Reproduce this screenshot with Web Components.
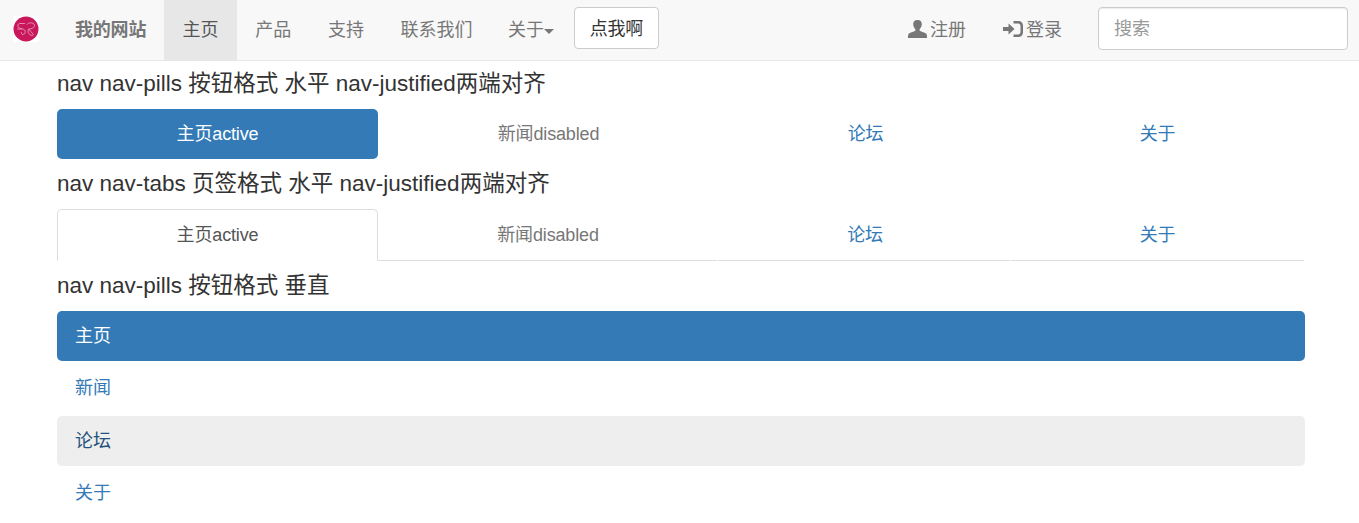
<!DOCTYPE html>
<html lang="zh">
<head>
<meta charset="utf-8">
<title>nav</title>
<style>
html, body { margin: 0; padding: 0; background: #fff; }
body {
    font-family: "Liberation Sans", "Noto Sans CJK SC", sans-serif;
    font-size: 18px;
    line-height: 26px;
    color: #333;
    overflow: hidden;
}
</style>
</head>
<body>
<site-navbar></site-navbar>
<page-main>
    <nav-title>nav nav-pills 按钮格式 水平 nav-justified两端对齐</nav-title>
    <nav-row kind="pills"></nav-row>
    <nav-title>nav nav-tabs 页签格式 水平 nav-justified两端对齐</nav-title>
    <nav-row kind="tabs"></nav-row>
    <nav-title>nav nav-pills 按钮格式 垂直</nav-title>
    <nav-stack></nav-stack>
</page-main>

<script>
class SiteNavbar extends HTMLElement {
    constructor() {
        super();
        this.attachShadow({ mode: 'open' });
        this.shadowRoot.innerHTML = `
            <style>
                :host {
                    display: flex;
                    align-items: stretch;
                    height: 60px;
                    background: #f8f8f8;
                    border-bottom: 1px solid #e7e7e7;
                }
                a {
                    display: flex;
                    align-items: center;
                    padding: 0 18px;
                    color: #777;
                    text-decoration: none;
                    white-space: nowrap;
                }
                .links a { padding: 0 18.35px; }
                .links { display: flex; }
                .logo {
                    width: 26px;
                    height: 26px;
                    margin: 16px 0 0 13px;
                    background: #fff;
                }
                .brand { margin-left: 18px; padding-right: 18px; font-weight: bold; letter-spacing: -.2px; }
                .active { background: #e7e7e7; color: #555; }
                .links a.about { padding-left: 17px; padding-right: 20px; }
                .caret {
                    width: 0;
                    height: 0;
                    margin-left: 0;
                    margin-top: 2px;
                    border-top: 5px solid #777;
                    border-left: 5px solid transparent;
                    border-right: 5px solid transparent;
                }
                button {
                    align-self: flex-start;
                    box-sizing: border-box;
                    width: 85px;
                    height: 42px;
                    margin: 7px 0 0;
                    padding: 2px 0 0;
                    font: inherit;
                    letter-spacing: -.2px;
                    color: #333;
                    background: #fff;
                    border: 1px solid #ccc;
                    border-radius: 4px;
                }
                .spacer { flex: 1; }
                svg.icon { fill: #777; flex: none; }
                input {
                    align-self: flex-start;
                    box-sizing: border-box;
                    width: 250px;
                    height: 43px;
                    margin: 7px 11px 0 18px;
                    padding: 2px 15px 0;
                    font: inherit;
                    color: #555;
                    background: #fff;
                    border: 1px solid #ccc;
                    border-radius: 4px;
                    box-shadow: inset 0 1px 1px rgba(0, 0, 0, .075);
                    outline: none;
                }
                input::placeholder { color: #999; opacity: 1; }
            </style>
            <svg class="logo" viewBox="0 0 26 26">
                <circle cx="13" cy="13" r="12.5" fill="#c9175c"/>
                <path d="M12 7.5H7C4.5 7.5 4 11 6.5 12L11 13.5C13 14.5 12.5 18.5 10 18.5C8.5 18.5 8 17 8.5 16M4 13H9M14 8.5C15 6.5 20.5 6 21.5 9C22 11.5 19 13 15.5 13L20 18C21 19 19 20 17.5 19C15 17.5 14.5 15.5 15.5 13" fill="none" stroke="#f0b8cf" stroke-width=".7"/>
            </svg>
            <a class="brand" href="#">我的网站</a>
            <div class="links">
                <a class="active" href="#">主页</a>
                <a href="#">产品</a>
                <a href="#">支持</a>
                <a href="#">联系我们</a>
                <a class="about" href="#">关于<span class="caret"></span></a>
            </div>
            <button type="button">点我啊</button>
            <span class="spacer"></span>
            <a href="#" style="padding-right:18px">
                <svg class="icon" style="width:19px;height:18px;margin-right:3px;margin-top:-2px" viewBox="0 0 19 18"><path d="M9.5 0C6.4 0 5 2 5.2 4.6C5.4 6.8 6.4 8.2 7.4 9.2V10.6C7.4 11.4 3 12.2 1 13.6C.2 14.2 0 15.6 0 18H19C19 15.6 18.8 14.2 18 13.6C16 12.2 11.6 11.4 11.6 10.6V9.2C12.6 8.2 13.6 6.8 13.8 4.6C14 2 12.6 0 9.5 0Z"/></svg>
                注册
            </a>
            <a href="#" style="padding-left:19px">
                <svg class="icon" style="width:20px;height:18px;margin-right:3px;margin-top:-2px" viewBox="0 0 20 18"><path d="M0 7H5.5V3.6L11.5 9L5.5 14.4V11H0ZM10.5 1H15.5C18 1 20 3 20 5.5V12.5C20 15 18 17 15.5 17H10.5V14.5H15C16.6 14.5 17.5 13.6 17.5 12V6C17.5 4.4 16.6 3.5 15 3.5H10.5Z"/></svg>
                登录
            </a>
            <input type="text" placeholder="搜索">
        `;
    }
}

class PageMain extends HTMLElement {
    constructor() {
        super();
        this.attachShadow({ mode: 'open' });
        this.shadowRoot.innerHTML = `
            <style>
                :host { display: block; padding: 0 54px 0 57px; }
            </style>
            <slot></slot>
        `;
    }
}

class NavTitle extends HTMLElement {
    constructor() {
        super();
        this.attachShadow({ mode: 'open' });
        this.shadowRoot.innerHTML = `
            <style>
                :host {
                    display: block;
                    height: 48px;
                    font-size: 22.5px;
                    line-height: 45px;
                    color: #333;
                    white-space: nowrap;
                }
                :host(:not(:first-child)) { padding-top: 2px; }
            </style>
            <slot></slot>
        `;
    }
}

class NavRow extends HTMLElement {
    constructor() {
        super();
        this.attachShadow({ mode: 'open' });
        this.shadowRoot.innerHTML = `
            <style>
                :host {
                    display: grid;
                    grid-template-columns: 321px 340px 293px 293px;
                    text-align: center;
                    letter-spacing: -.15px;
                }
                a {
                    display: block;
                    padding: 12px 0;
                    color: #337ab7;
                    text-decoration: none;
                }
                .off { color: #777; padding-left: 1px; }
                .forum { padding-left: 2px; }
                :host([kind=pills]) .on { background: #337ab7; color: #fff; border-radius: 5px; }
                :host([kind=tabs]) { height: 52px; }
                :host([kind=tabs]) a { padding-top: 13px; height: 26px; border-bottom: 1px solid #ddd; }
                :host([kind=tabs]) a.off,
                :host([kind=tabs]) a.forum { margin-right: 1px; }
                :host([kind=tabs]) .on {
                    color: #555;
                    background: #fff;
                    border: 1px solid #ddd;
                    border-bottom-color: #fff;
                    border-radius: 5px 5px 0 0;
                    padding-top: 12px;
                }
            </style>
            <a class="on" href="#">主页active</a>
            <a class="off" href="#">新闻disabled</a>
            <a class="forum" href="#">论坛</a>
            <a href="#">关于</a>
        `;
    }
}

class NavStack extends HTMLElement {
    constructor() {
        super();
        this.attachShadow({ mode: 'open' });
        this.shadowRoot.innerHTML = `
            <style>
                :host { display: flex; flex-direction: column; gap: 2.4px; }
                a {
                    display: block;
                    padding: 12px 18px;
                    color: #337ab7;
                    text-decoration: none;
                    border-radius: 5px;
                }
                .on { background: #337ab7; color: #fff; }
                .hover { background: #eee; color: #23527c; }
            </style>
            <a class="on" href="#">主页</a>
            <a href="#">新闻</a>
            <a class="hover" href="#">论坛</a>
            <a href="#">关于</a>
        `;
    }
}

customElements.define('site-navbar', SiteNavbar);
customElements.define('page-main', PageMain);
customElements.define('nav-title', NavTitle);
customElements.define('nav-row', NavRow);
customElements.define('nav-stack', NavStack);
</script>
</body>
</html>
